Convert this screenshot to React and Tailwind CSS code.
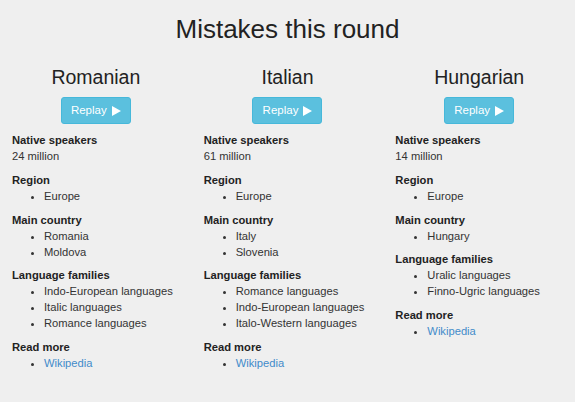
import React from "react";

const languages = [
  {
    name: "Romanian",
    speakers: "24 million",
    region: ["Europe"],
    countries: ["Romania", "Moldova"],
    families: ["Indo-European languages", "Italic languages", "Romance languages"],
  },
  {
    name: "Italian",
    speakers: "61 million",
    region: ["Europe"],
    countries: ["Italy", "Slovenia"],
    families: ["Romance languages", "Indo-European languages", "Italo-Western languages"],
  },
  {
    name: "Hungarian",
    speakers: "14 million",
    region: ["Europe"],
    countries: ["Hungary"],
    families: ["Uralic languages", "Finno-Ugric languages"],
  },
];

function Bullets({ items, link }) {
  return (
    <ul className="list-disc pl-8 mb-[7.5px]">
      {items.map((it) => (
        <li key={it}>
          {link ? <a className="text-[#428bca]">{it}</a> : it}
        </li>
      ))}
    </ul>
  );
}

function Column({ lang }) {
  return (
    <div className="px-3">
      <h2 className="text-center text-[19.5px] leading-6 mt-[21px] text-[#222]">{lang.name}</h2>
      <div className="flex justify-center mt-2">
        <button className="h-[27px] w-[70px] rounded-[3px] border border-[#46b8da] bg-[#5bc0de] text-white text-[11.5px] flex items-center justify-center gap-[5px]">
          <span>Replay</span>
          <svg width="9" height="10" viewBox="0 0 9 10">
            <path d="M0 0 L9 5 L0 10 Z" fill="white" />
          </svg>
        </button>
      </div>
      <div className="mt-2 text-[11.2px] leading-4 text-[#333]">
        <div className="font-bold text-[#222]">Native speakers</div>
        <div className="mb-2">{lang.speakers}</div>
        <div className="font-bold text-[#222]">Region</div>
        <Bullets items={lang.region} />
        <div className="font-bold text-[#222]">Main country</div>
        <Bullets items={lang.countries} />
        <div className="font-bold text-[#222]">Language families</div>
        <Bullets items={lang.families} />
        <div className="font-bold text-[#222]">Read more</div>
        <Bullets items={["Wikipedia"]} link />
      </div>
    </div>
  );
}

export default function App() {
  return (
    <div
      className="w-[575px] h-[402px] bg-[#efefef] pt-[14px] overflow-hidden"
      style={{ fontFamily: '"Liberation Sans", Arial, sans-serif' }}
    >
      <h1 className="text-center text-[26px] leading-[30px] text-[#222]">Mistakes this round</h1>
      <div className="grid grid-cols-3">
        {languages.map((l) => (
          <Column key={l.name} lang={l} />
        ))}
      </div>
    </div>
  );
}
